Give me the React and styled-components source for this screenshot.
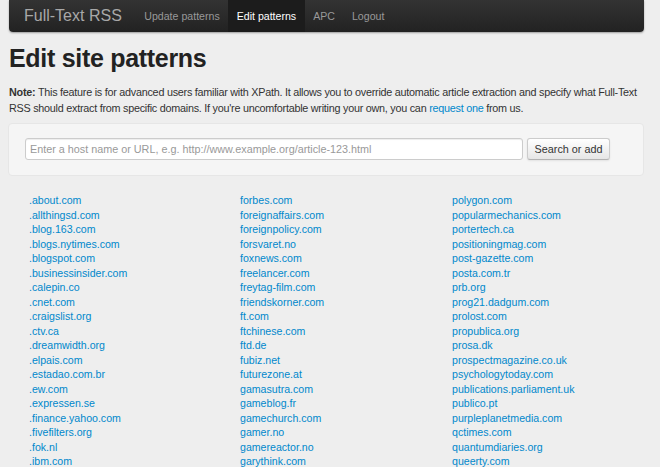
import React from "react";
import styled, { createGlobalStyle } from "styled-components";

const Global = createGlobalStyle`
  html, body { margin: 0; padding: 0; background: #eeeeee; overflow: hidden; }
  body { font-family: "Liberation Sans", Arial, sans-serif; color: #333; }
  * { box-sizing: border-box; }
`;

const Page = styled.div`
  padding: 0 8px 0 8px;
  width: 660px;
`;

const Navbar = styled.div`
  margin: 0 8px 0 1px;
  height: 32px;
  display: flex;
  align-items: stretch;
  background: linear-gradient(#333333, #222222);
  border-radius: 0 0 4px 4px;
  box-shadow: 0 1px 2px rgba(0,0,0,0.35);
  padding-left: 15px;
`;

const Brand = styled.a`
  display: flex;
  align-items: center;
  font-size: 16px;
  color: #a8a8a8;
  text-decoration: none;
  margin-right: 14px;
`;

const NavItem = styled.a`
  display: flex;
  align-items: center;
  padding: 0 8.5px;
  font-size: 10.6px;
  color: ${p => (p.$active ? "#ffffff" : "#999999")};
  background: ${p => (p.$active ? "#1c1c1c" : "transparent")};
  text-decoration: none;
`;

const Title = styled.h1`
  margin: 11px 0 0 1px;
  font-size: 25px;
  font-weight: bold;
  line-height: 30px;
  color: #222;
  letter-spacing: -0.3px;
`;

const Note = styled.p`
  margin: 11px 8px 0 1px;
  font-size: 10.8px;
  letter-spacing: -0.25px;
  line-height: 16px;
  color: #333;
`;

const Link = styled.a`
  color: #0088cc;
  text-decoration: none;
`;

const Well = styled.div`
  margin: 7px 8px 0 0;
  background: #f5f5f5;
  border: 1px solid #e6e6e6;
  border-radius: 4px;
  padding: 14px 16px 15px 16px;
  display: flex;
  align-items: center;
  gap: 4px;
`;

const Input = styled.input`
  width: 498px;
  height: 22px;
  border: 1px solid #cccccc;
  border-radius: 3px;
  background: #fff;
  font-family: "Liberation Sans", Arial, sans-serif;
  font-size: 10.8px;
  padding: 0 4px;
  color: #555;
  box-shadow: inset 0 1px 1px rgba(0,0,0,0.075);
  &::placeholder { color: #999; }
`;

const Button = styled.button`
  height: 22px;
  width: 83px;
  border: 1px solid #cccccc;
  border-bottom-color: #b3b3b3;
  border-radius: 3px;
  background: linear-gradient(#ffffff, #e6e6e6);
  font-family: "Liberation Sans", Arial, sans-serif;
  font-size: 10.8px;
  color: #333;
  box-shadow: 0 1px 2px rgba(0,0,0,0.08);
  padding: 0;
`;

const Columns = styled.div`
  display: grid;
  grid-template-columns: 211px 212px 212px;
  margin-top: 17px;
`;

const List = styled.ul`
  list-style: none;
  margin: 0;
  padding: 0 0 0 21px;
`;

const Item = styled.li`
  font-size: 10.6px;
  line-height: 14.5px;
`;

const col1 = [".about.com", ".allthingsd.com", ".blog.163.com", ".blogs.nytimes.com", ".blogspot.com", ".businessinsider.com", ".calepin.co", ".cnet.com", ".craigslist.org", ".ctv.ca", ".dreamwidth.org", ".elpais.com", ".estadao.com.br", ".ew.com", ".expressen.se", ".finance.yahoo.com", ".fivefilters.org", ".fok.nl", ".ibm.com"];
const col2 = ["forbes.com", "foreignaffairs.com", "foreignpolicy.com", "forsvaret.no", "foxnews.com", "freelancer.com", "freytag-film.com", "friendskorner.com", "ft.com", "ftchinese.com", "ftd.de", "fubiz.net", "futurezone.at", "gamasutra.com", "gameblog.fr", "gamechurch.com", "gamer.no", "gamereactor.no", "garythink.com"];
const col3 = ["polygon.com", "popularmechanics.com", "portertech.ca", "positioningmag.com", "post-gazette.com", "posta.com.tr", "prb.org", "prog21.dadgum.com", "prolost.com", "propublica.org", "prosa.dk", "prospectmagazine.co.uk", "psychologytoday.com", "publications.parliament.uk", "publico.pt", "purpleplanetmedia.com", "qctimes.com", "quantumdiaries.org", "queerty.com"];

export default function App() {
  return (
    <>
      <Global />
      <Page>
        <Navbar>
          <Brand href="#">Full-Text RSS</Brand>
          <NavItem href="#">Update patterns</NavItem>
          <NavItem href="#" $active>Edit patterns</NavItem>
          <NavItem href="#">APC</NavItem>
          <NavItem href="#">Logout</NavItem>
        </Navbar>
        <Title>Edit site patterns</Title>
        <Note>
          <strong>Note:</strong> This feature is for advanced users familiar with XPath. It allows you to override automatic article extraction and specify what Full-Text RSS should extract from specific domains. If you're uncomfortable writing your own, you can <Link href="#">request one</Link> from us.
        </Note>
        <Well>
          <Input placeholder="Enter a host name or URL, e.g. http://www.example.org/article-123.html" />
          <Button>Search or add</Button>
        </Well>
        <Columns>
          {[col1, col2, col3].map((col, i) => (
            <List key={i}>
              {col.map(d => (
                <Item key={d}><Link href="#">{d}</Link></Item>
              ))}
            </List>
          ))}
        </Columns>
      </Page>
    </>
  );
}
